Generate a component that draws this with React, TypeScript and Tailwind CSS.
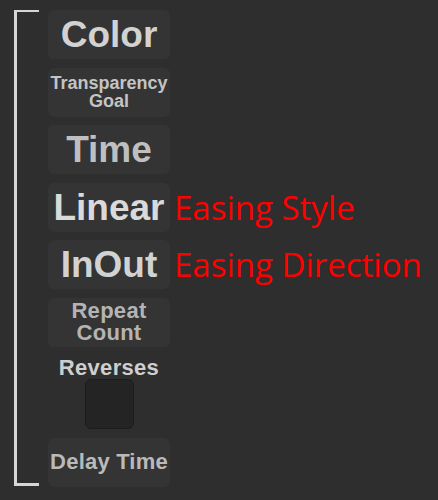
const boxBase =
  'w-[122px] h-[49px] shrink-0 rounded-md bg-[#343434] flex items-center justify-center text-center font-bold leading-none';

function Field({ children, className }: { children: React.ReactNode; className: string }) {
  return <div className={`${boxBase} ${className}`}>{children}</div>;
}

export default function App() {
  return (
    <div
      className="w-[438px] h-[500px] bg-[#2e2e2e] flex pt-[10px] pl-[14px]"
      style={{ fontFamily: '"Liberation Sans", Arial, sans-serif' }}
    >
      {/* bracket */}
      <div className="w-[25px] h-[476px] border-l-[3px] border-t-2 border-b-[3px] border-[#d6d6d6]" />

      <div className="ml-[9px] flex flex-col gap-[8.5px]">
        <Field className="text-[37px] text-[#d2d2d2]">Color</Field>
        <Field className="text-[18px] text-[#c4c4c4] leading-[18px]">
          Transparency
          <br />
          Goal
        </Field>
        <Field className="text-[37px] text-[#bfbfbf]">Time</Field>

        <div className="flex items-center">
          <Field className="text-[37px] text-[#dadada]">Linear</Field>
          <span
            className="ml-[4px] text-[33px] text-[#ff0000] leading-none"
            style={{ fontFamily: '"Open Sans", "Noto Sans", sans-serif' }}
          >
            Easing Style
          </span>
        </div>
        <div className="flex items-center">
          <Field className="text-[37px] text-[#d2d2d2]">InOut</Field>
          <span
            className="ml-[4px] text-[33px] text-[#ff0000] leading-none"
            style={{ fontFamily: '"Open Sans", "Noto Sans", sans-serif' }}
          >
            Easing Direction
          </span>
        </div>

        <Field className="text-[22px] text-[#b4b4b4] leading-[24px] tracking-[0.3px]">
          Repeat
          <br />
          Count
        </Field>

        <div className="flex flex-col items-center w-[122px]">
          <div className="h-[24px] flex items-center text-[22px] font-bold text-[#cecece] tracking-[0.3px]">
            Reverses
          </div>
          <div className="w-[49px] h-[50px] rounded-md bg-[#242424] border border-[#1c1c1c]" />
        </div>

        <Field className="text-[22px] text-[#bababa] tracking-[0.2px]">Delay Time</Field>
      </div>
    </div>
  );
}
